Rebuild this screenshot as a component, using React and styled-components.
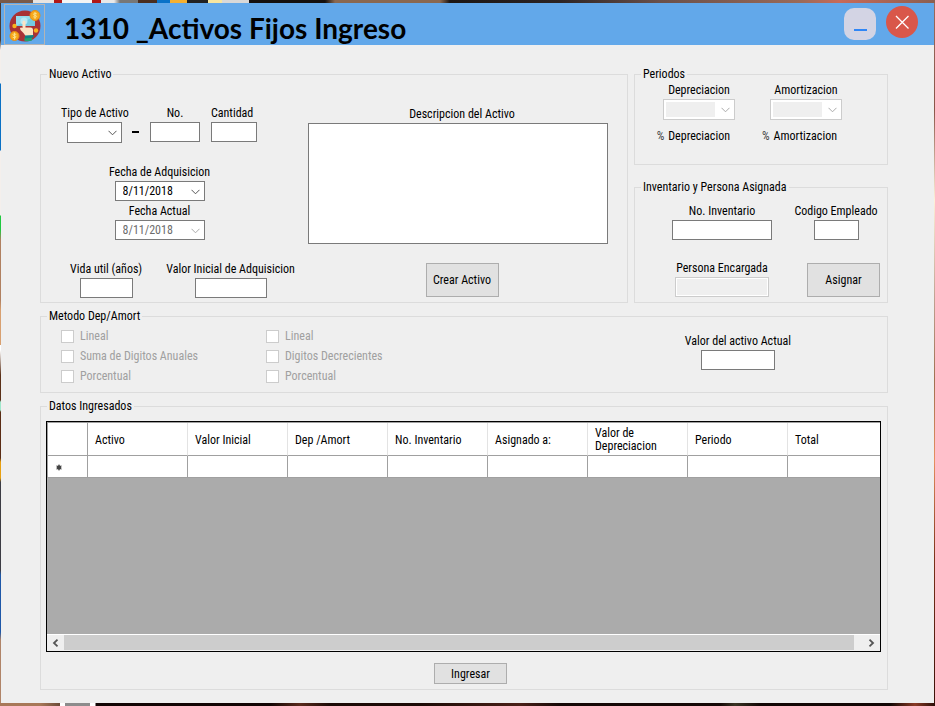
import React from "react";
import styled, { createGlobalStyle } from "styled-components";

const GlobalStyle = createGlobalStyle`
  *, *::before, *::after { box-sizing: border-box; }
  body {
    margin: 0;
    background: #efefef;
    color: #000;
    font: 12px/16px "Roboto Condensed", "Liberation Sans Narrow", "Liberation Sans", sans-serif;
  }
  button, input, select, textarea { font: inherit; color: inherit; margin: 0; }
`;

const Desktop = styled.div`
  min-height: 100vh;
  display: flex;
  padding: 3px 1px;
  background:
    linear-gradient(90deg, #7a5a48 0 33px, #e8e4e0 33px 54px, #b01818 54px 62px, #f4f4f4 62px 92px, #b01818 92px 101px, #e8e8e8 101px 114px, #777 120px 138px, #4a2e20 138px 157px, #0a72c8 157px 170px, #f5b030 170px 187px, #222 187px 208px, #f7e6a0 208px 222px, #d8d8d8 222px 249px, #15100e 249px 325px, #8a6850 335px 440px, #1c1614 450px, #2c2424 560px, #6a504a 660px, #9a6a58 800px, #c86a58 840px, #8a5f50) top / 100% 3px no-repeat,
    linear-gradient(90deg, #a87858 0 40px, #6a4a38 60px, #fff 60px 65px, #8c8c8c 65px 90px, #fff 90px 95px, #120504 96px 270px, #5a2a1c 300px, #1c0a06 330px 420px, #4a2018 520px, #150806 560px 720px, #3a3424 735px, #120705 760px 890px, #8a3a26 915px, #2a0e08) bottom / 100% 3px no-repeat,
    linear-gradient(#4a3a30 0 40px, #f4efec 50px 83px, #0a70c4 84px 150px, #f4efec 151px 215px, #20c840 216px 230px, #b08060 240px 300px, #d8a070 310px 345px, #fff 345px 350px, #5a3018 375px 400px, #9fe8cc 402px 410px, #5a2c14 412px 458px, #e8a010 462px 478px, #3c3c44 482px 570px, #1e58a8 575px 632px, #b08468 640px) left / 1px 100% no-repeat,
    linear-gradient(#9a6a5c 0, #8a5548 110px, #fff0d8 200px, #c0a090 300px, #a07050 380px, #e89060 460px, #7a3018 560px, #3a1008) right / 1px 100% no-repeat,
    #efefef;
`;

const Window = styled.main`
  flex: 1;
  min-width: 0;
  background: #efefef;
`;

const TitleBar = styled.header`
  display: flex;
  align-items: center;
  height: 42px;
  padding: 0 16px 0 3px;
  background: #62a8ea;
`;

const AppIcon = styled.div`
  width: 41px;
  height: 41px;
  border: 1px solid #b4b4b4;
  svg { display: block; }
`;

const Title = styled.h1`
  flex: 1;
  margin: 0;
  padding: 8px 0 0 19px;
  font: bold 28px/32px Lato, "Open Sans", sans-serif;
`;

const WindowButton = styled.button`
  display: grid;
  place-items: center;
  align-self: flex-start;
  width: 32px;
  height: 32px;
  margin-left: 10px;
  margin-top: ${(p) => (p.$close ? "3px" : "5px")};
  padding: 0;
  border: 0;
  border-radius: ${(p) => (p.$close ? "50%" : "10px")};
  background: ${(p) => (p.$close ? "#d9574a" : "#d3d4e4")};
`;

const Content = styled.div`
  display: flex;
  flex-direction: column;
  gap: 7px;
  padding: 23px 46px 13px 39px;
`;

const TopRow = styled.div`
  display: grid;
  grid-template-columns: minmax(0, 588fr) minmax(0, 254fr);
  gap: 6px;
`;

const SideColumn = styled.div`
  display: flex;
  flex-direction: column;
  justify-content: space-between;
  gap: 16px;
`;

const Group = styled.fieldset`
  min-width: 0;
  margin: 0;
  padding: 0;
  border: 1px solid #dcdcdc;
`;

const Legend = styled.legend`
  margin-left: 6px;
  padding: 0 2px;
  line-height: 13px;
`;

const NewAsset = styled.div`
  display: flex;
  padding: 24px 19px 4px 20px;
`;

const AssetFields = styled.div`
  display: flex;
  flex-direction: column;
  gap: 21px;
  width: 247px;
`;

const CodeRow = styled.div`
  display: flex;
  align-items: flex-start;
  gap: 11px;
`;

const TypeWithDash = styled.div`
  display: flex;
  justify-content: space-between;
  align-items: flex-end;
  width: 78px;
`;

const Dash = styled.span`
  width: 7px;
  height: 2px;
  margin-bottom: 10px;
  background: #000;
`;

const DateColumn = styled.div`
  display: flex;
  flex-direction: column;
  align-items: center;
  gap: 2px;
  padding-right: 50px;
`;

const ValueRow = styled.div`
  display: flex;
  gap: 24px;
  padding-left: 9px;
`;

const FieldBox = styled.div`
  display: flex;
  flex-direction: column;
  align-items: ${(p) => p.$align || "center"};
  gap: 1px;
  white-space: nowrap;
`;

const TextInput = styled.input`
  width: ${(p) => p.$w}px;
  height: 20px;
  padding: 0 3px;
  border: 1px solid #7a7a7a;
  border-radius: 0;
  background: #fff;
  &:disabled {
    border-color: #cccccc;
    background: #efefef;
    box-shadow: inset 0 0 0 1px #fff;
  }
`;

const SelectShell = styled.div`
  display: flex;
  width: ${(p) => p.$w}px;
  height: 21px;
  border: 1px solid ${(p) => (p.$disabled ? "#cccccc" : "#7a7a7a")};
  background: #fff;
`;

const Select = styled.select`
  appearance: none;
  width: 100%;
  padding: 0 18px 0 3px;
  border: 0;
  border-radius: 0;
  background:
    url("data:image/svg+xml,%3Csvg xmlns='http://www.w3.org/2000/svg' width='9' height='6'%3E%3Cpath d='M.5 .8l4 4 4-4' fill='none' stroke='%23555'/%3E%3C/svg%3E") right 4px center no-repeat;
  &:disabled {
    opacity: 1;
    background:
      url("data:image/svg+xml,%3Csvg xmlns='http://www.w3.org/2000/svg' width='9' height='6'%3E%3Cpath d='M.5 .8l4 4 4-4' fill='none' stroke='%23aaa'/%3E%3C/svg%3E") right 4px center no-repeat,
      linear-gradient(#efefef, #efefef) 2px 2px / calc(100% - 21px) calc(100% - 4px) no-repeat;
  }
`;

const DateShell = styled.div`
  display: flex;
  width: 90px;
  height: 20px;
  border: 1px solid #7a7a7a;
  background: #fff;
  color: ${(p) => (p.$disabled ? "#6d6d6d" : "#000")};
`;

const DateInput = styled.input`
  flex: 1;
  min-width: 0;
  padding: 0 0 0 7px;
  border: 0;
  background: transparent;
  font-size: 12px;
`;

const DateButton = styled.button`
  display: grid;
  place-items: center;
  width: 17px;
  padding: 2px 0 0;
  border: 0;
  background: transparent;
`;

const Description = styled.div`
  flex: 1;
  display: flex;
  flex-direction: column;
  padding-top: 1px;
`;

const Centered = styled.div`
  display: flex;
  justify-content: center;
  padding-left: 8px;
`;

const TextArea = styled.textarea`
  display: block;
  width: 100%;
  height: 121px;
  margin: 1px 0 19px;
  padding: 2px;
  border: 1px solid #7a7a7a;
  border-radius: 0;
  background: #fff;
  resize: none;
`;

const PushButton = styled.button`
  width: 73px;
  height: ${(p) => (p.$tall ? 34 : 21)}px;
  padding: 0;
  border: 1px solid #adadad;
  border-radius: 0;
  background: #e1e1e1;
  white-space: nowrap;
`;

const Periods = styled.div`
  display: flex;
  gap: 26px;
  padding: 1px 19px 20px;
`;

const Period = styled.div`
  display: flex;
  flex-direction: column;
  align-items: flex-end;
  gap: 8px;
  width: 81px;
`;

const Rate = styled.div`
  display: flex;
  gap: 4px;
  padding-right: 5px;
`;

const Percent = styled.span`
  color: #444;
`;

const Inventory = styled.div`
  display: grid;
  grid-template-columns: 100px minmax(0, 1fr);
  gap: 20px 20px;
  padding: 9px 7px 5px 37px;
  ${PushButton} { justify-self: end; align-self: end; }
`;

const Methods = styled.div`
  display: flex;
  justify-content: space-between;
  padding: 5px 96px 8px 20px;
`;

const Checks = styled.div`
  display: grid;
  grid-template-columns: 205px auto;
  grid-auto-flow: column;
  grid-template-rows: repeat(3, 16px);
  row-gap: 4px;
`;

const CheckLabel = styled.label`
  display: flex;
  align-items: center;
  gap: 6px;
  color: #a0a0a0;
`;

const CheckBox = styled.input`
  appearance: none;
  width: 13px;
  height: 13px;
  border: 1px solid #cccccc;
  background: #fff;
`;

const CurrentValue = styled.div`
  padding-top: 5px;
`;

const DataSection = styled.div`
  display: flex;
  flex-direction: column;
  gap: 11px;
  padding: 8px 6px 5px 5px;
`;

const Actions = styled.div`
  display: flex;
  justify-content: center;
  padding-left: 14px;
`;

const DataGrid = styled.div`
  border: 1px solid #000;
  background: #ababab;
`;

const Table = styled.table`
  width: 100%;
  table-layout: fixed;
  border-collapse: separate;
  border-spacing: 0;
  border-top: 1px solid #a0a0a0;
  border-left: 1px solid #a0a0a0;
`;

const Col = styled.col`
  width: ${(p) => p.$w};
`;

const HeadCell = styled.th`
  height: 33px;
  padding: 2px 7px 0;
  border-right: 1px solid ${(p) => (p.$corner ? "#a0a0a0" : "#e3e3e3")};
  border-bottom: 1px solid #a0a0a0;
  background: #fff;
  font-weight: normal;
  line-height: 13px;
  text-align: left;
  &:last-child { border-right: 0; }
`;

const Cell = styled.td`
  height: 22px;
  padding: 0 7px;
  border-right: 1px solid #a0a0a0;
  border-bottom: 1px solid #a0a0a0;
  background: #fff;
  &:last-child { border-right: 0; }
  svg { display: block; }
`;

const EmptyArea = styled.div`
  height: 156px;
`;

const ScrollBar = styled.div`
  display: flex;
  height: 17px;
  border-top: 1px solid #fff;
  border-bottom: 1px solid #efefef;
  background: #efefef;
`;

const ScrollArrow = styled.button`
  display: grid;
  place-items: center;
  width: 17px;
  padding: 0;
  border: 0;
  background: #efefef;
`;

const ScrollThumb = styled.div`
  flex: 1;
  margin-right: 9px;
  background: #cdcdcd;
`;

function Field({ id, label, align, children }) {
  return (
    <FieldBox $align={align}>
      <label htmlFor={id}>{label}</label>
      {children}
    </FieldBox>
  );
}

function SelectField({ id, label, width, disabled }) {
  return (
    <Field id={id} label={label}>
      <SelectShell $w={width} $disabled={disabled}>
        <Select id={id} disabled={disabled} defaultValue="">
          <option value="" />
        </Select>
      </SelectShell>
    </Field>
  );
}

function InputField({ id, label, width, align, disabled }) {
  return (
    <Field id={id} label={label} align={align}>
      <TextInput id={id} type="text" $w={width} disabled={disabled} />
    </Field>
  );
}

function DateField({ id, label, disabled }) {
  return (
    <Field id={id} label={label}>
      <DateShell $disabled={disabled}>
        <DateInput id={id} type="text" defaultValue="8/11/2018" disabled={disabled} />
        <DateButton type="button" aria-label={`Abrir ${label}`} disabled={disabled}>
          <svg width="9" height="6" viewBox="0 0 9 6">
            <path d="M.5 .8l4 4 4-4" fill="none" stroke={disabled ? "#aaa" : "#555"} />
          </svg>
        </DateButton>
      </DateShell>
    </Field>
  );
}

function Check({ children }) {
  return (
    <CheckLabel>
      <CheckBox type="checkbox" disabled />
      {children}
    </CheckLabel>
  );
}

function PaymentIcon() {
  return (
    <svg width="39" height="39" viewBox="0 0 39 39">
      <circle cx="20" cy="21" r="15.5" fill="#a83236" />
      <rect x="11" y="11" width="19" height="10" fill="#74cbe4" />
      <path d="M11 11h19l-19 10z" fill="#93dcef" />
      <circle cx="19" cy="16" r="3.5" fill="#b9e9f5" />
      <path d="M17.500 17q0-1.500 1.500-1.500t1.500 1.500v5.500h5q2.500 0 2.500 2.500v6h-7.500q-1.500-3-3.500-4.500-2-1.500-2-3.500 1-1 2.500 0z" fill="#fbe3c4" />
      <path d="M19.500 32.500h7.500v3q-3.500 1-7.500.5z" fill="#21a06d" />
      <path d="M20 30.500l8.500-.5v2.500l-8.500 1z" fill="#0c7f86" />
      <circle cx="9.500" cy="21" r="2.200" fill="#f9b31c" />
      <circle cx="31" cy="25.500" r="2.200" fill="#f9b31c" />
      <g fill="#f7a81b" stroke="#e88d12">
        <circle cx="30" cy="10.500" r="5" />
        <circle cx="9.500" cy="31" r="4.500" />
      </g>
      <g fill="none" stroke="#fbe08a">
        <path d="M31.800 8.800q-3.400-1.300-3.400.4c0 1.400 3.300.8 3.300 2.300q0 1.500-3.500.3M30 7v7" />
        <path d="M11.200 29.400q-3.300-1.300-3.300.4c0 1.300 3.200.7 3.200 2.200q0 1.500-3.400.3M9.500 27.700v6.800" />
      </g>
    </svg>
  );
}

const COLUMNS = [
  "Activo",
  "Valor Inicial",
  "Dep /Amort",
  "No. Inventario",
  "Asignado a:",
  "Valor de Depreciacion",
  "Periodo",
  "Total",
];

export default function App() {
  return (
    <Desktop>
      <GlobalStyle />
      <Window>
        <TitleBar>
          <AppIcon><PaymentIcon /></AppIcon>
          <Title>1310 _Activos Fijos Ingreso</Title>
          <WindowButton type="button" aria-label="Minimizar">
            <svg width="32" height="32" viewBox="0 0 32 32">
              <path d="M10 22h13" stroke="#2f86f6" strokeWidth="2" />
            </svg>
          </WindowButton>
          <WindowButton type="button" aria-label="Cerrar" $close>
            <svg width="32" height="32" viewBox="0 0 32 32">
              <path d="M10 10l12.500 12.500M22.500 10L10 22.500" stroke="#fff" strokeWidth="1.300" />
            </svg>
          </WindowButton>
        </TitleBar>
        <Content>
          <TopRow>
            <Group>
              <Legend>Nuevo Activo</Legend>
              <NewAsset>
                <AssetFields>
                  <CodeRow>
                    <TypeWithDash>
                      <SelectField id="tipo" label="Tipo de Activo" width={55} />
                      <Dash />
                    </TypeWithDash>
                    <InputField id="numero" label="No." width={50} />
                    <InputField id="cantidad" label="Cantidad" width={46} align="flex-start" />
                  </CodeRow>
                  <DateColumn>
                    <DateField id="adquisicion" label="Fecha de Adquisicion" />
                    <DateField id="actual" label="Fecha Actual" disabled />
                  </DateColumn>
                  <ValueRow>
                    <InputField id="vida" label="Vida util (años)" width={53} />
                    <InputField id="inicial" label="Valor Inicial de Adquisicion" width={72} />
                  </ValueRow>
                </AssetFields>
                <Description>
                  <Centered>
                    <label htmlFor="descripcion">Descripcion del Activo</label>
                  </Centered>
                  <TextArea id="descripcion" />
                  <Centered>
                    <PushButton type="button" $tall>Crear Activo</PushButton>
                  </Centered>
                </Description>
              </NewAsset>
            </Group>
            <SideColumn>
              <Group>
                <Legend>Periodos</Legend>
                <Periods>
                  {["Depreciacion", "Amortizacion"].map((name) => (
                    <Period key={name}>
                      <SelectField id={name} label={name} width={72} disabled />
                      <Rate><Percent>%</Percent>{name}</Rate>
                    </Period>
                  ))}
                </Periods>
              </Group>
              <Group>
                <Legend>Inventario y Persona Asignada</Legend>
                <Inventory>
                  <InputField id="inventario" label="No. Inventario" width={100} />
                  <InputField id="codigo" label="Codigo Empleado" width={45} />
                  <InputField id="persona" label="Persona Encargada" width={94} disabled />
                  <PushButton type="button" $tall>Asignar</PushButton>
                </Inventory>
              </Group>
            </SideColumn>
          </TopRow>
          <Group>
            <Legend>Metodo Dep/Amort</Legend>
            <Methods>
              <Checks>
                <Check>Lineal</Check>
                <Check>Suma de Digitos Anuales</Check>
                <Check>Porcentual</Check>
                <Check>Lineal</Check>
                <Check>Digitos Decrecientes</Check>
                <Check>Porcentual</Check>
              </Checks>
              <CurrentValue>
                <InputField id="valor" label="Valor del activo Actual" width={74} />
              </CurrentValue>
            </Methods>
          </Group>
          <Group>
            <Legend>Datos Ingresados</Legend>
            <DataSection>
              <DataGrid>
                <Table>
                  <colgroup>
                    <Col $w="40px" />
                    {COLUMNS.map((c, i) => (
                      <Col key={c} $w={i < COLUMNS.length - 1 ? "100px" : "auto"} />
                    ))}
                  </colgroup>
                  <thead>
                    <tr>
                      <HeadCell $corner />
                      {COLUMNS.map((c) => <HeadCell key={c} scope="col">{c}</HeadCell>)}
                    </tr>
                  </thead>
                  <tbody>
                    <tr>
                      <Cell>
                        <svg width="8" height="8" viewBox="0 0 8 8">
                          <circle cx="4" cy="4.500" r="2.300" fill="#444" />
                          <path d="M4 1.500v6M1.400 3l5.200 3M6.600 3L1.400 6" stroke="#444" />
                        </svg>
                      </Cell>
                      {COLUMNS.map((c) => <Cell key={c} />)}
                    </tr>
                  </tbody>
                </Table>
                <EmptyArea />
                <ScrollBar>
                  <ScrollArrow type="button" aria-label="Desplazar a la izquierda">
                    <svg width="7" height="8" viewBox="0 0 7 8">
                      <path d="M5.500 .7L2 4l3.500 3.300" fill="none" stroke="#555" strokeWidth="1.800" />
                    </svg>
                  </ScrollArrow>
                  <ScrollThumb />
                  <ScrollArrow type="button" aria-label="Desplazar a la derecha">
                    <svg width="7" height="8" viewBox="0 0 7 8">
                      <path d="M1.500 .7L5 4 1.500 7.300" fill="none" stroke="#555" strokeWidth="1.800" />
                    </svg>
                  </ScrollArrow>
                </ScrollBar>
              </DataGrid>
              <Actions>
                <PushButton type="button">Ingresar</PushButton>
              </Actions>
            </DataSection>
          </Group>
        </Content>
      </Window>
    </Desktop>
  );
}
